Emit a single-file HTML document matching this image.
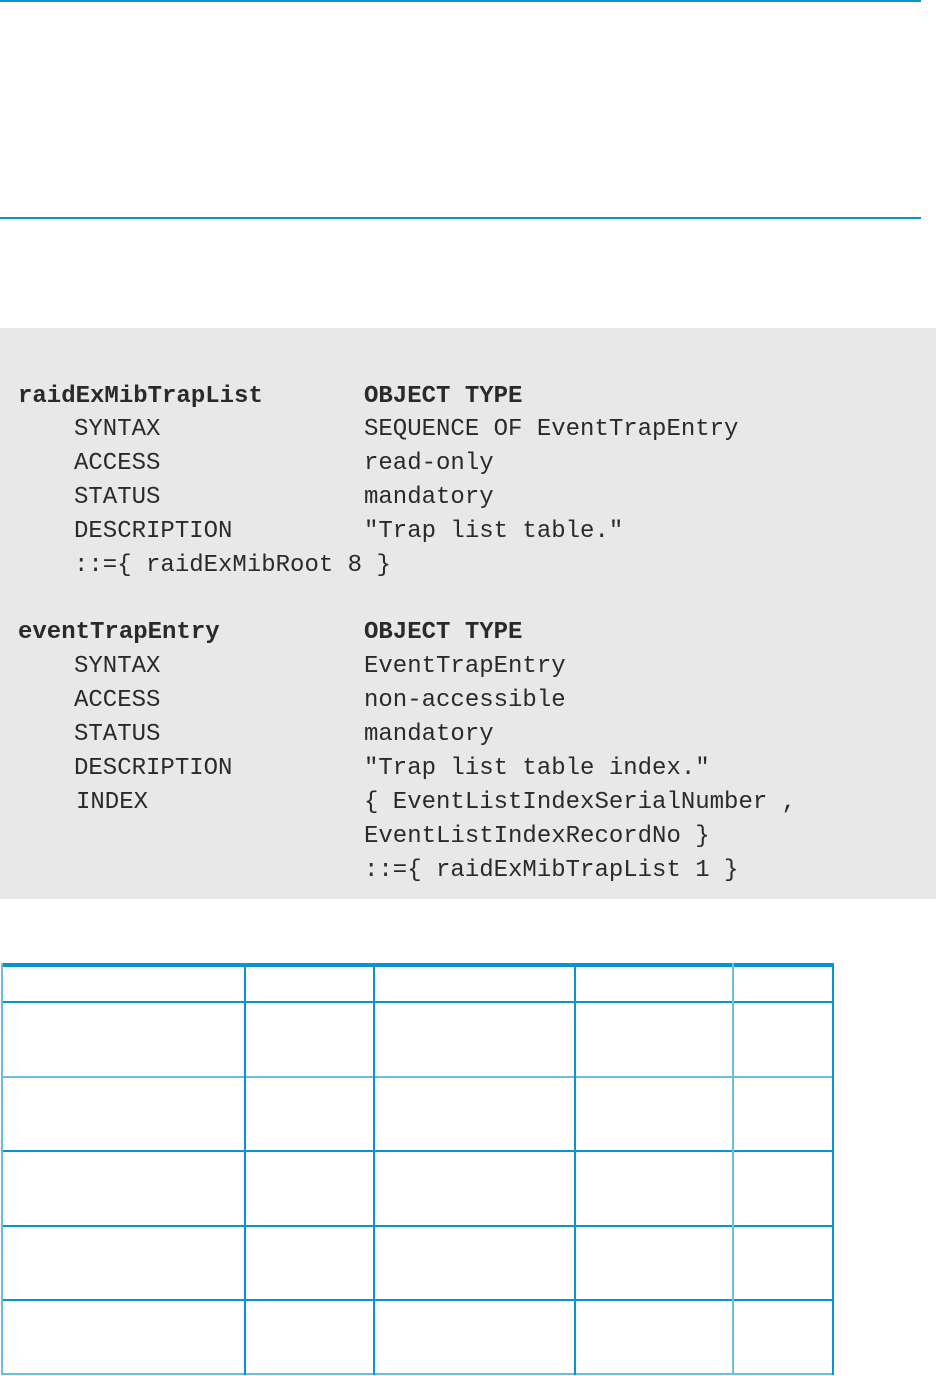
<!DOCTYPE html>
<html><head><style>
body{margin:0;width:936px;height:1376px;background:#fff;position:relative;overflow:hidden}
.code{position:absolute;left:0;top:328px;width:936px;height:571px;background:#e8e8e8}
.t{position:absolute;font-family:"Liberation Mono","Courier New",monospace;font-size:24px;line-height:34px;color:#2a2a2a;white-space:pre;height:34px}
.b{font-weight:bold}
.h{position:absolute;background:#0894cf}
</style></head><body>
<div class="h" style="left:0;top:0;width:921px;height:2px"></div>
<div class="h" style="left:0;top:217px;width:921px;height:2px"></div>
<div class="code"></div>
<div class="t b" style="left:18px;top:380px">raidExMibTrapList</div>
<div class="t" style="left:74px;top:413px">SYNTAX</div>
<div class="t" style="left:74px;top:447px">ACCESS</div>
<div class="t" style="left:74px;top:481px">STATUS</div>
<div class="t" style="left:74px;top:515px">DESCRIPTION</div>
<div class="t" style="left:74px;top:549px">::={ raidExMibRoot 8 }</div>
<div class="t b" style="left:364px;top:380px">OBJECT TYPE</div>
<div class="t" style="left:364px;top:413px">SEQUENCE OF EventTrapEntry</div>
<div class="t" style="left:364px;top:447px">read-only</div>
<div class="t" style="left:364px;top:481px">mandatory</div>
<div class="t" style="left:364px;top:515px">"Trap list table."</div>
<div class="t b" style="left:18px;top:616px">eventTrapEntry</div>
<div class="t" style="left:74px;top:650px">SYNTAX</div>
<div class="t" style="left:74px;top:684px">ACCESS</div>
<div class="t" style="left:74px;top:718px">STATUS</div>
<div class="t" style="left:74px;top:752px">DESCRIPTION</div>
<div class="t" style="left:76px;top:786px">INDEX</div>
<div class="t b" style="left:364px;top:616px">OBJECT TYPE</div>
<div class="t" style="left:364px;top:650px">EventTrapEntry</div>
<div class="t" style="left:364px;top:684px">non-accessible</div>
<div class="t" style="left:364px;top:718px">mandatory</div>
<div class="t" style="left:364px;top:752px">"Trap list table index."</div>
<div class="t" style="left:364px;top:786px">{ EventListIndexSerialNumber ,</div>
<div class="t" style="left:364px;top:820px">EventListIndexRecordNo }</div>
<div class="t" style="left:364px;top:854px">::={ raidExMibTrapList 1 }</div>

<div class="h" style="left:1px;top:963px;width:833px;height:4px"></div>
<div class="h" style="left:1px;top:1001px;width:833px;height:2px"></div>
<div class="h" style="left:1px;top:1076px;width:833px;height:2px;background:#6cbde0"></div>
<div class="h" style="left:1px;top:1150px;width:833px;height:2px"></div>
<div class="h" style="left:1px;top:1225px;width:833px;height:2px"></div>
<div class="h" style="left:1px;top:1299px;width:833px;height:2px"></div>
<div class="h" style="left:1px;top:1373px;width:833px;height:2px;background:#6cbde0"></div>
<div class="h" style="left:1px;top:963px;width:2px;height:412px;background:#6cbde0"></div>
<div class="h" style="left:244px;top:963px;width:2px;height:412px"></div>
<div class="h" style="left:373px;top:963px;width:2px;height:412px"></div>
<div class="h" style="left:574px;top:963px;width:2px;height:412px"></div>
<div class="h" style="left:732px;top:963px;width:2px;height:412px;background:#6cbde0"></div>
<div class="h" style="left:832px;top:963px;width:2px;height:412px"></div>
</body></html>
